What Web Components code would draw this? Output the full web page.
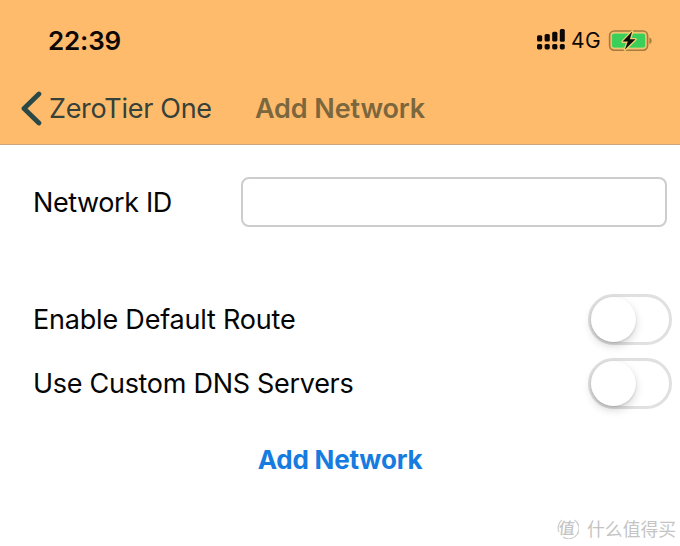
<!DOCTYPE html>
<html lang="en">
<head>
<meta charset="utf-8">
<title>Add Network</title>
<style>
html, body { margin: 0; height: 100%; overflow: hidden; background: #fff; }
body { font-family: Inter, "Liberation Sans", sans-serif; color: #050505; }
</style>
</head>
<body>
<network-screen></network-screen>
<script>
const define = (name, html) => {
  const template = document.createElement('template');
  template.innerHTML = html;
  customElements.define(name, class extends HTMLElement {
    constructor() {
      super();
      this.attachShadow({ mode: 'open' }).append(template.content.cloneNode(true));
    }
  });
};

define('status-bar', `
<style>
:host { display: flex; align-items: center; height: 30px; padding: 26px 28px 0 48px; line-height: 30px; color: #0d0805; }
.time { font-size: 26px; font-weight: 600; letter-spacing: -.18px; flex: 1; }
.net { font-size: 21px; margin: 0 7px 0 5px; letter-spacing: .4px; }
svg { display: block; }
.signal { margin-bottom: 2px; }
</style>
<span class="time"><slot name="time"></slot></span>
<svg class="signal" width="29" height="22" viewBox="0 0 29 22" fill="#0d0805">
  <rect x="0" y="6.2" width="5.2" height="6.4" rx="1.5"/><rect x="7.6" y="5" width="5.2" height="7.6" rx="1.5"/>
  <rect x="15.2" y="2.8" width="5.2" height="9.8" rx="1.5"/><rect x="22.8" y="0" width="5" height="12.8" rx="1.5"/>
  <rect x="0" y="15" width="5.2" height="5.4" rx="1.6"/><rect x="7.6" y="15" width="5.2" height="5.4" rx="1.6"/>
  <rect x="15.2" y="15" width="5.2" height="5.4" rx="1.6"/><rect x="22.8" y="15" width="5" height="5.4" rx="1.6"/>
</svg>
<span class="net"><slot name="net"></slot></span>
<svg width="44" height="24" viewBox="0 0 44 24">
  <rect x="1.6" y="2" width="38" height="19.2" rx="4.6" fill="none" stroke="#a37a3f" stroke-width="1.6"/>
  <rect x="3.6" y="4.2" width="34" height="14.8" rx="2.4" fill="#39cf58" stroke="#d3d77a" stroke-width=".8"/>
  <path d="M41.4 8.5c3 1.1 3 5.3 0 6.4z" fill="#a37a3f"/>
  <path d="M24.2 2.6 14.6 12.6h5.2l-2.9 8 10.6-10.3h-5.6z" fill="#0b0d08" stroke="#f3cf72" stroke-width="2.6" stroke-linejoin="round" paint-order="stroke"/>
</svg>`);

define('nav-bar', `
<style>
:host { display: flex; align-items: center; height: 38px; padding: 33.5px 0 17px 20px; line-height: 38px; font-size: 27px; color: #354139; }
svg { display: block; margin-right: 7px; }
.back { letter-spacing: -.3px; width: 206px; }
.title { font-weight: 600; letter-spacing: -.12px; color: #7b673e; }
</style>
<svg width="22" height="36" viewBox="0 0 22 36" fill="none" stroke="#294846" stroke-width="4.8" stroke-linecap="round" stroke-linejoin="round"><path d="M18.9 3 4 17.5 18.9 32"/></svg>
<span class="back"><slot name="back"></slot></span>
<span class="title"><slot></slot></span>`);

define('app-header', `
<style>
:host { display: block; height: 145px; box-sizing: border-box; background: #ffbb6c; border-bottom: 1px solid #c9a67e; }
</style><slot></slot>`);

define('form-row', `
<style>
:host { display: flex; align-items: center; justify-content: space-between; height: 64px; padding-left: 33px; font-size: 27px; line-height: 34px; white-space: nowrap; letter-spacing: var(--track, -.29px); }
.label { padding-top: 1px; }
</style><span class="label"><slot></slot></span><slot name="control"></slot>`);

define('text-field', `
<style>
:host { display: block; width: 426px; height: 50px; margin-right: 13px; }
input { display: block; width: 100%; height: 100%; box-sizing: border-box; border: 2px solid #cdcdcd; border-radius: 8px; background: #fff; outline: 0; padding: 0 12px; font: inherit; }
</style><input type="text" aria-label="Network ID">`);

define('toggle-switch', `
<style>
:host { display: flex; width: 84px; height: 51px; margin-right: 8px; box-sizing: border-box; border: 3px solid #e0e0e0; border-radius: 26px; background: #fff; }
i { width: 45px; height: 45px; border-radius: 50%; background: #fff; box-shadow: 0 4px 9px rgba(0,0,0,.17), 0 1px 2px rgba(0,0,0,.13); }
</style><i></i>`);

define('link-button', `
<style>
:host { display: flex; justify-content: center; }
button { all: unset; cursor: pointer; font-size: 26px; line-height: 34px; font-weight: 650; letter-spacing: -.2px; color: #167ce0; }
</style><button><slot></slot></button>`);

define('water-mark', `
<style>
:host { display: flex; align-items: center; gap: 8px; color: #c4c4c4; font: 17.8px/24px "Noto Sans CJK SC", sans-serif; }
.seal { position: relative; width: 22px; height: 22px; display: grid; place-items: center; font-size: 16px; }
b { font-weight: 500; line-height: 20px; transform: translate(-1px, -1px) skewX(-6deg); }
svg { position: absolute; inset: 0; }
</style>
<span class="seal"><svg width="22" height="22" viewBox="0 0 22 22" fill="none" stroke="#cccccc" stroke-width="1.2"><path d="M17.5 3A10.2 10.2 0 0 1 6 20M2 15A10.2 10.2 0 0 1 5 3"/></svg><b>值</b></span>
<span><slot></slot></span>`);

define('network-screen', `
<style>
:host { display: flex; flex-direction: column; width: 680px; height: 546px; background: #fff; }
.id { margin-top: 25px; --track: -.4px; }
.route { margin-top: 53px; --track: -.2px; }
link-button { margin-top: 28px; }
water-mark { margin: auto 4px 6px auto; }
</style>
<app-header>
  <status-bar><span slot="time">22:39</span><span slot="net">4G</span></status-bar>
  <nav-bar><span slot="back">ZeroTier One</span>Add Network</nav-bar>
</app-header>
<form-row class="id">Network ID<text-field slot="control"></text-field></form-row>
<form-row class="route">Enable Default Route<toggle-switch slot="control"></toggle-switch></form-row>
<form-row>Use Custom DNS Servers<toggle-switch slot="control"></toggle-switch></form-row>
<link-button>Add Network</link-button>
<water-mark>什么值得买</water-mark>`);
</script>
</body>
</html>
